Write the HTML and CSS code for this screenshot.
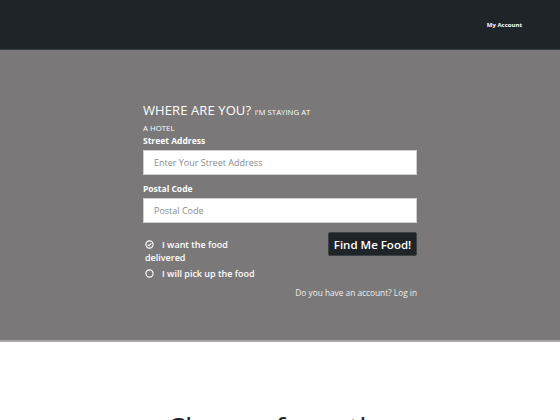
FILE: index.html
```html
<!DOCTYPE html>
<html>
<head>
<meta charset="utf-8">
<link rel="stylesheet" href="styles.css">
</head>
<body>
<header class="topbar">
  <a class="account" href="#">My Account</a>
</header>
<section class="hero">
  <form class="finder">
    <h1 class="title">WHERE ARE YOU? <small>I'M STAYING AT A HOTEL</small></h1>
    <label class="label">Street Address</label>
    <div class="input">Enter Your Street Address</div>
    <label class="label">Postal Code</label>
    <div class="input">Postal Code</div>
    <div class="options">
      <div class="choices">
        <div class="choice"><span class="radio"><svg viewBox="0 0 10 10" width="9" height="9"><circle cx="5" cy="5" r="4" fill="none" stroke="#fff" stroke-width="1.3"/><path d="M3 5.1 L4.5 6.5 L7 3.7" fill="none" stroke="#fff" stroke-width="1.2"/></svg></span>I want the food delivered</div>
        <div class="choice"><span class="radio"><svg viewBox="0 0 10 10" width="9" height="9"><circle cx="5" cy="5" r="4" fill="none" stroke="#fff" stroke-width="1.3"/></svg></span>I will pick up the food</div>
      </div>
      <button type="button" class="btn">Find Me Food!</button>
    </div>
    <p class="login">Do you have an account? Log in</p>
  </form>
</section>
<section class="choose">
  <h2>Choose from the</h2>
</section>
</body>
</html>
```
FILE: styles.css
```css
* { box-sizing: border-box; }
body { margin: 0; font-family: "Open Sans", sans-serif; background: #fff; }
.topbar { height: 50px; background: #1e2428; display: flex; justify-content: flex-end; align-items: center; padding-right: 38px; border-bottom: 1px solid #3a3e41; }
.account { color: #fff; font-size: 6px; font-weight: bold; text-decoration: none; margin-top: 1px; }
.hero { background: #7a7878; height: 292px; display: flex; justify-content: center; padding-top: 52px; border-bottom: 2px solid #a9a7a7; }
.finder { width: 274px; display: flex; flex-direction: column; }
.title { margin: 0 0 2px; width: 172px; font-weight: 400; font-size: 13px; color: #fff; line-height: 16px; letter-spacing: 0.1px; }
.title small { font-size: 7.8px; letter-spacing: 0; line-height: 10px; }
.label { color: #fff; font-size: 8.5px; font-weight: bold; margin: 0 0 4px; line-height: 10px; }
.input { height: 25px; background: #fff; border: 1px solid #cfcfcf; font-size: 9px; color: #8a8a8a; padding-left: 10px; display: flex; align-items: center; margin-bottom: 9px; }
.options { display: flex; justify-content: space-between; align-items: flex-start; }
.choices { display: flex; flex-direction: column; gap: 3px; padding-top: 6px; }
.choice { color: #fff; font-size: 9px; font-weight: 600; line-height: 13px; width: 118px; padding-left: 2px; }
.radio { display: inline-block; width: 17px; }
.radio svg { display: inline-block; vertical-align: -1px; }
.btn { background: #1e2428; color: #fff; border: 1px solid #3b4144; border-radius: 2px; height: 24px; width: 89px; font-family: "Open Sans", sans-serif; font-size: 11.5px; font-weight: 600; padding: 0; }
.login { margin: 7px 0 0; text-align: right; font-size: 8.3px; color: #eee; }
.choose { text-align: center; padding-top: 66px; }
.choose h2 { margin: 0; font-weight: 400; font-size: 29px; color: #1e2428; }
```
